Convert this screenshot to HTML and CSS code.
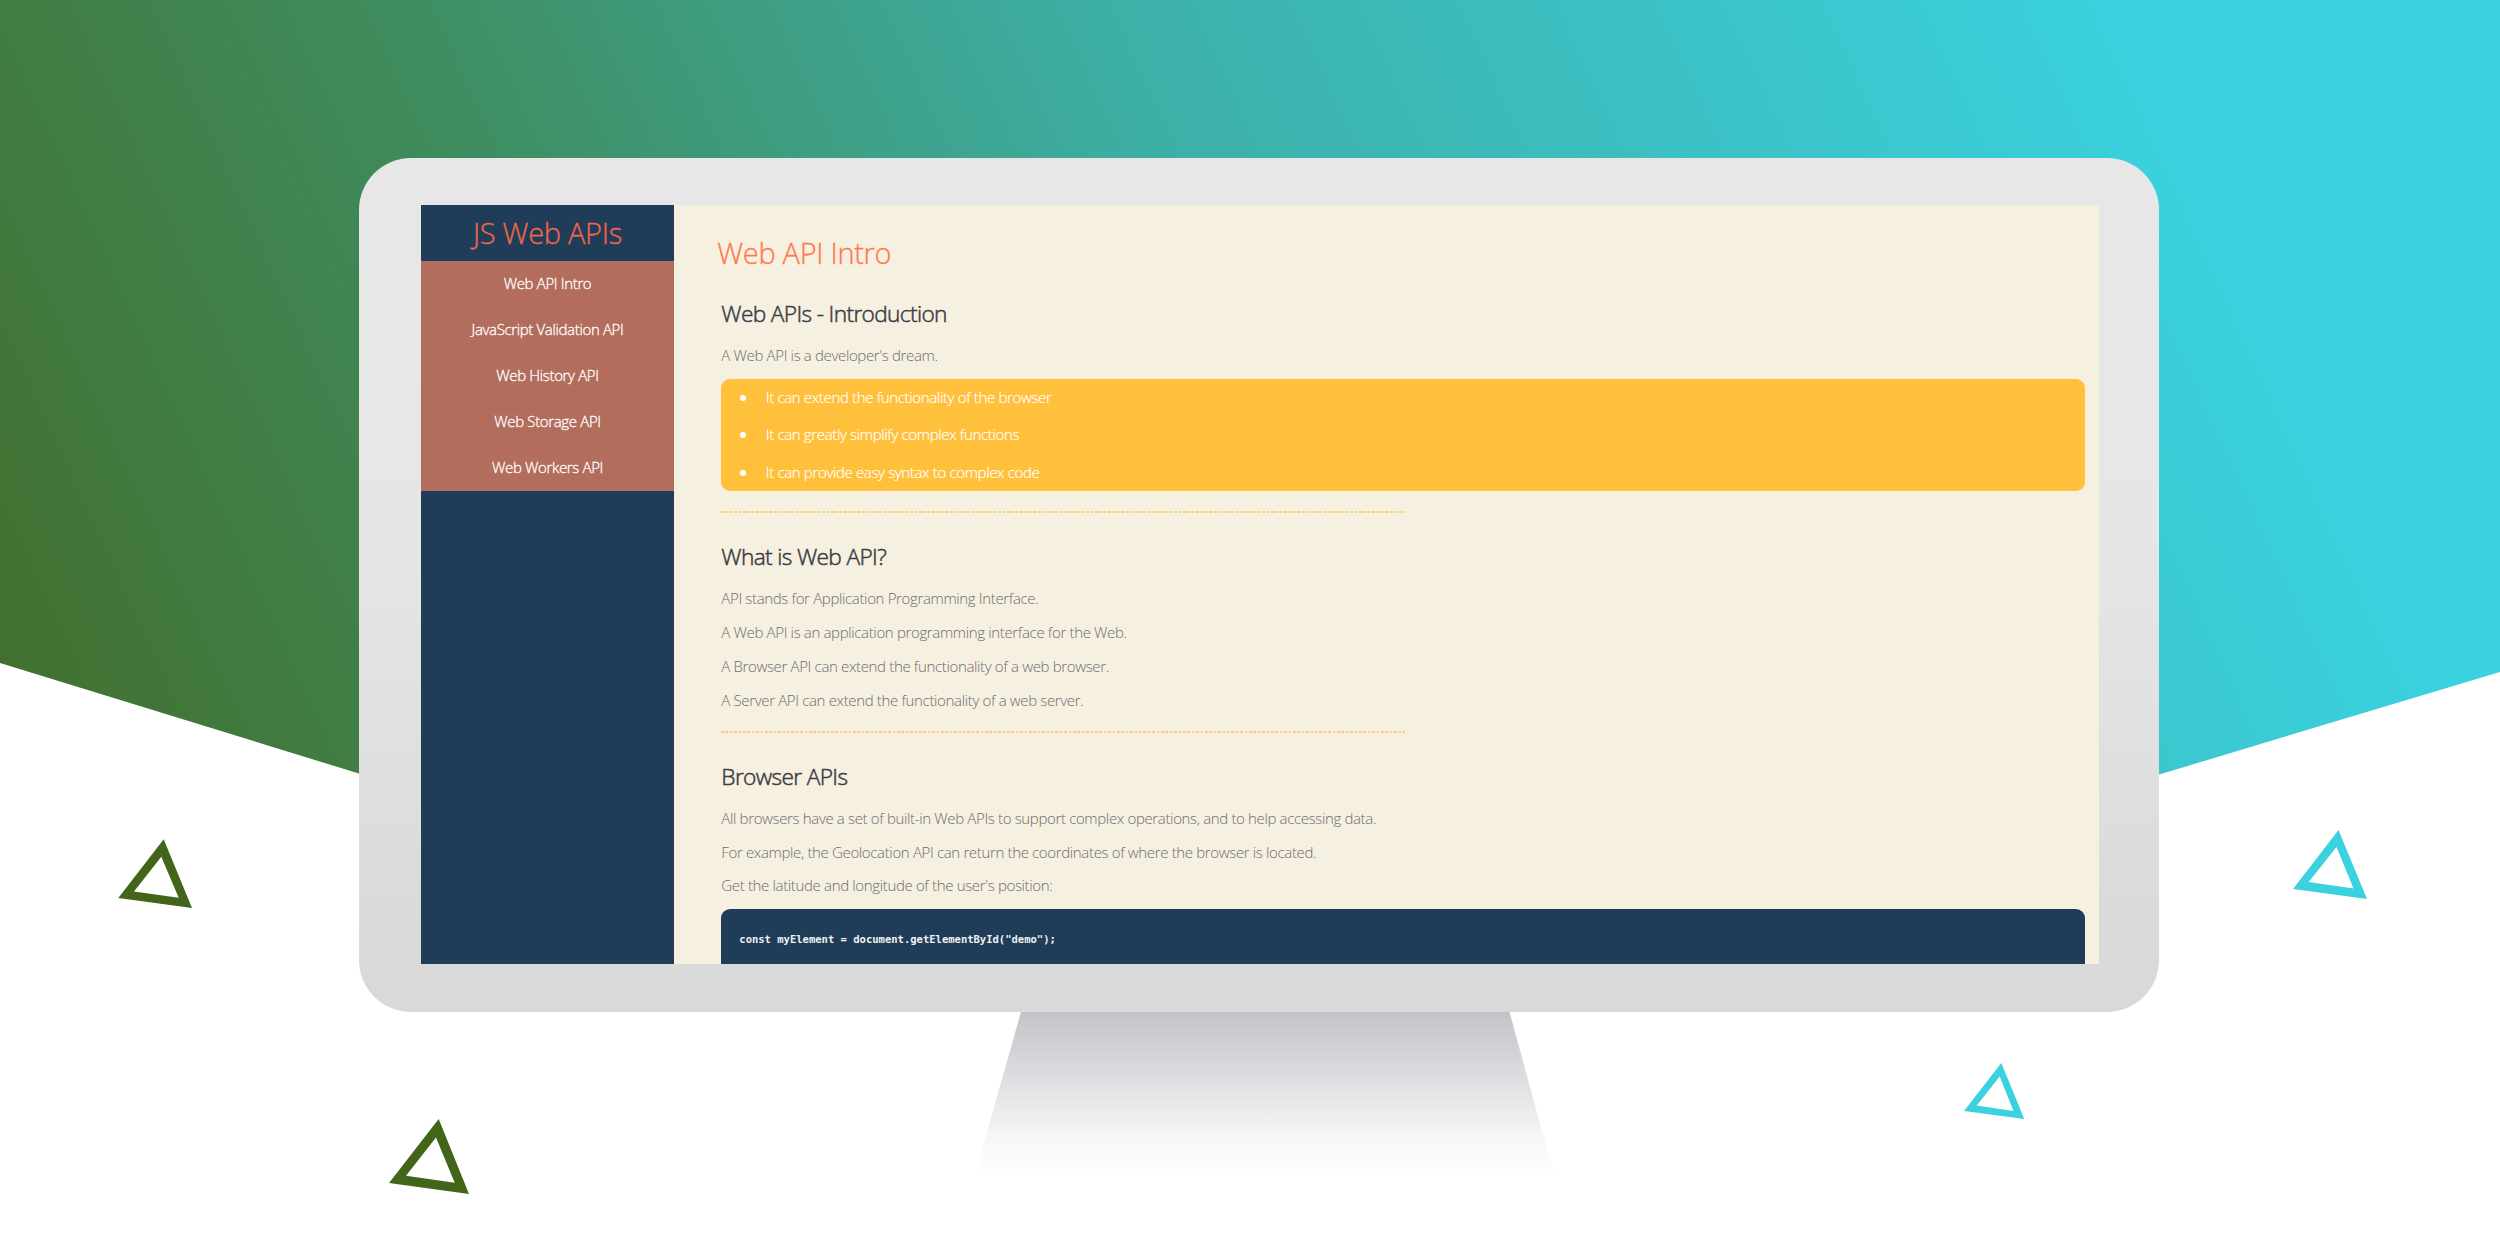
FILE: index.html
```html
<!DOCTYPE html>
<html lang="en">
<head>
<meta charset="utf-8">
<title>JS Web APIs</title>
<link rel="stylesheet" href="styles.css">
</head>
<body>
<svg class="backdrop" viewBox="0 0 2500 1250" aria-hidden="true">
  <defs>
    <linearGradient id="sky" gradientUnits="userSpaceOnUse" x1="0" y1="663" x2="2025" y2="-265">
      <stop offset="0" stop-color="#42702f"/>
      <stop offset="0.27" stop-color="#3f8b5c"/>
      <stop offset="0.59" stop-color="#3db1aa"/>
      <stop offset="1" stop-color="#3ad2e0"/>
    </linearGradient>
    <linearGradient id="stand" x1="0" y1="0" x2="0" y2="1">
      <stop offset="0" stop-color="#c5c2c8"/>
      <stop offset="0.4" stop-color="#dfdde1"/>
      <stop offset="0.75" stop-color="#f6f6f6"/>
      <stop offset="1" stop-color="#ffffff"/>
    </linearGradient>
  </defs>
  <path fill="url(#sky)" d="M0 0H2500V672L1250 1048L0 663Z"/>
  <path fill="url(#stand)" d="M1021 1012H1509.500L1555 1178H974Z"/>
  <g fill="#42651a" fill-rule="evenodd">
    <path d="M163.700 839.300L118.300 898L192 908ZM161.300 856.700L134 891.500L178.700 897.700Z"/>
    <path d="M438.700 1119L389 1183L469 1194ZM436 1137.500L406 1175.700L454.700 1182.700Z"/>
  </g>
  <g fill="#3cd1de" fill-rule="evenodd">
    <path d="M2338.500 830L2293 889L2367 899ZM2336.500 847L2308.700 882L2353.500 888.500Z"/>
    <path d="M2001.300 1063L1964 1111L2024.300 1119ZM1999.700 1076.500L1976.700 1105.500L2013.500 1111Z"/>
  </g>
</svg>
<div class="monitor">
  <div class="screen">
    <nav class="sidebar">
      <h1 class="brand">JS Web APIs</h1>
      <ul class="menu">
        <li>Web API Intro</li>
        <li>JavaScript Validation API</li>
        <li>Web History API</li>
        <li>Web Storage API</li>
        <li>Web Workers API</li>
      </ul>
    </nav>
    <main class="content">
      <h2 class="title">Web API Intro</h2>
      <section class="topic">
        <h3>Web APIs - Introduction</h3>
        <p>A Web API is a developer's dream.</p>
        <ul class="benefits">
          <li>It can extend the functionality of the browser</li>
          <li>It can greatly simplify complex functions</li>
          <li>It can provide easy syntax to complex code</li>
        </ul>
      </section>
      <hr class="divider">
      <section class="topic">
        <h3>What is Web API?</h3>
        <p>API stands for Application Programming Interface.</p>
        <p>A Web API is an application programming interface for the Web.</p>
        <p>A Browser API can extend the functionality of a web browser.</p>
        <p>A Server API can extend the functionality of a web server.</p>
      </section>
      <hr class="divider">
      <section class="topic">
        <h3>Browser APIs</h3>
        <p>All browsers have a set of built-in Web APIs to support complex operations, and to help accessing data.</p>
        <p>For example, the Geolocation API can return the coordinates of where the browser is located.</p>
        <p>Get the latitude and longitude of the user's position:</p>
        <pre class="code">const myElement = document.getElementById("demo");</pre>
      </section>
    </main>
  </div>
</div>
</body>
</html>
```
FILE: styles.css
```css
* { box-sizing: border-box; margin: 0; padding: 0; }

body {
  position: relative;
  width: 2500px;
  height: 1250px;
  overflow: hidden;
  padding: 158px 0 0 359px;
  background: #fff;
  font-family: "Open Sans", sans-serif;
  font-weight: 300;
}

.backdrop {
  position: absolute;
  inset: 0;
  width: 2500px;
  height: 1250px;
}

.monitor {
  position: relative;
  width: 1800px;
  height: 854px;
  padding: 47px 60px 48px 62px;
  border-radius: 52px;
  background: linear-gradient(#e7e7e7 0%, #e6e6e6 45%, #dadadb 90%, #d9d9da 100%);
}

.screen {
  display: flex;
  width: 1678px;
  height: 759px;
  overflow: hidden;
  background: #f6f0e1;
}

.sidebar { flex: none; width: 253px; background: #1f3d59; }

.brand {
  height: 55.500px;
  color: #f0664a;
  font-size: 29px;
  font-weight: 300;
  letter-spacing: -0.300px;
  line-height: 56px;
  text-align: center;
  -webkit-text-stroke: 0.300px;
}

.menu {
  list-style: none;
  height: 230.500px;
  background: #b26d5d;
  color: #fff;
  font-size: 15px;
  letter-spacing: -0.350px;
  text-align: center;
  -webkit-text-stroke: 0.300px;
}

.menu li { height: 46.200px; line-height: 45px; }

.content { flex: 1; padding: 28px 14.500px 0 47.300px; }

.title {
  margin: 0 0 24.900px -4px;
  color: #ff7850;
  font-size: 29px;
  font-weight: 300;
  letter-spacing: -0.330px;
  line-height: 40px;
  -webkit-text-stroke: 0.300px;
}

.topic { display: flow-root; }

.topic h3 {
  margin-bottom: 9px;
  color: #3c3c44;
  font-size: 22.700px;
  font-weight: 300;
  letter-spacing: -0.640px;
  line-height: 32px;
  -webkit-text-stroke: 0.500px;
}

.topic p {
  color: #6c6c6c;
  font-size: 15px;
  letter-spacing: -0.350px;
  line-height: 33.700px;
}

.benefits {
  height: 112px;
  margin: 6.400px 0 7px;
  border-radius: 9px;
  background: #ffc03c;
  color: #fff;
  font-size: 15px;
  letter-spacing: -0.350px;
  line-height: 37.500px;
  list-style: none;
  -webkit-text-stroke: 0.200px;
}

.benefits li {
  display: flex;
  align-items: center;
  gap: 19.500px;
  padding-left: 19px;
}

.benefits li::before {
  content: "";
  width: 6px;
  height: 6px;
  border-radius: 50%;
  background: #fff;
}

.divider {
  width: 684px;
  height: 2px;
  margin: 13.500px 0 28px;
  border: 0;
  background: repeating-linear-gradient(90deg, #fad07c 0 2.600px, #f6eacb 2.600px 4.400px);
}

.code {
  height: 80px;
  margin-top: 6px;
  padding: 19px 18px;
  border-radius: 9px;
  background: #1f3d59;
  color: #f0f0f0;
  font: bold 10.530px/22px "DejaVu Sans Mono", monospace;
}
```
